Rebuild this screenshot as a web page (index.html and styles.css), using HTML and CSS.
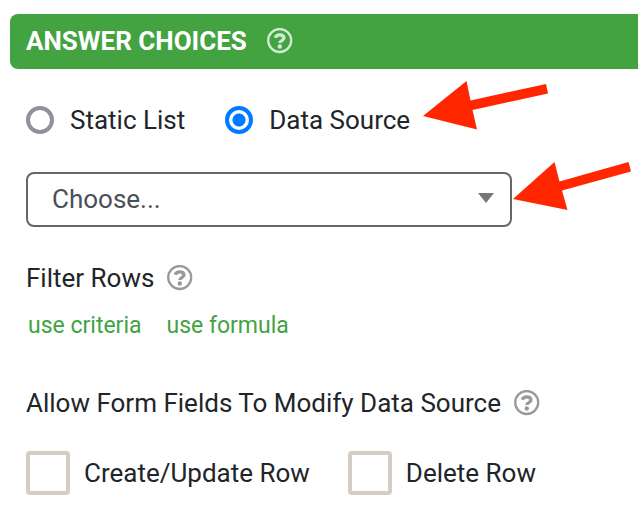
FILE: index.html
```html
<!DOCTYPE html>
<html lang="en">
<head>
<meta charset="utf-8">
<title>Answer Choices</title>
<link rel="stylesheet" href="styles.css">
</head>
<body>
<svg class="defs" aria-hidden="true">
  <symbol id="help" viewBox="0 0 26 26">
    <circle cx="12.700" cy="12.500" r="11.500" fill="none" stroke="currentColor" stroke-width="2.300"/>
    <path d="M8.300 9.800C9 7.800 10.600 6.900 12.700 6.900c2.400 0 4.200 1.200 4.200 3.200 0 2.600-4 2.400-4 4.900" fill="none" stroke="currentColor" stroke-width="3.400"/>
    <circle cx="12.800" cy="18.500" r="2.200" fill="currentColor"/>
  </symbol>
</svg>
<main class="panel">
  <header class="panel-header">
    <h1 class="panel-title">ANSWER CHOICES</h1>
    <button class="help help-light" type="button" aria-label="Help"><svg><use href="#help"/></svg></button>
  </header>
  <form class="panel-body">
    <div class="radios">
      <label class="option"><input class="radio" type="radio" name="source">Static List</label>
      <label class="option"><input class="radio" type="radio" name="source" checked>Data Source
        <svg class="arrow arrow-option" viewBox="0 0 126 50" aria-hidden="true"><path d="M0 36 43.500 1 47.500 20.500 123 4 125 13.500 49.500 30 54 49.500Z"/></svg>
      </label>
    </div>
    <div class="select-wrap">
      <select class="select" aria-label="Data source"><option>Choose...</option></select>
      <svg class="caret" viewBox="0 0 16 10" aria-hidden="true"><path d="M0 0h16L8 10Z"/></svg>
      <svg class="arrow arrow-select" viewBox="0 0 120 50" aria-hidden="true"><path d="M1 38 42.500 1 47.500 20.500 116.500 1 119 10.500 50 29.500 55.500 49Z"/></svg>
    </div>
    <div class="heading">
      <h2 class="label">Filter Rows</h2>
      <button class="help" type="button" aria-label="Help"><svg><use href="#help"/></svg></button>
    </div>
    <div class="links">
      <a href="#criteria">use criteria</a>
      <a href="#formula">use formula</a>
    </div>
    <div class="heading">
      <h2 class="label">Allow Form Fields To Modify Data Source</h2>
      <button class="help" type="button" aria-label="Help"><svg><use href="#help"/></svg></button>
    </div>
    <div class="checks">
      <label class="check"><input class="checkbox" type="checkbox">Create/Update Row</label>
      <label class="check"><input class="checkbox" type="checkbox">Delete Row</label>
    </div>
  </form>
</main>
</body>
</html>
```
FILE: styles.css
```css
* { box-sizing: border-box; }
body {
  margin: 0;
  background: #fff;
  color: #212529;
  font: 26px/36px Roboto, sans-serif;
}
.defs { position: absolute; width: 0; height: 0; }
.panel { padding: 14px 0 0 10px; }
.panel-header {
  display: flex;
  align-items: center;
  gap: 20px;
  height: 55px;
  padding: 0 16px 2px;
  border-radius: 8px 0 0 8px;
  background: #43a341;
  color: #fff;
}
.panel-title, .label { margin: 0; font-size: 26px; }
.panel-title { font-weight: 700; }
.label { font-weight: 400; }
.help {
  width: 26px;
  height: 26px;
  padding: 0;
  border: 0;
  background: none;
  color: #999;
}
.help svg { display: block; width: 26px; height: 26px; }
.help-light { color: #d3ead2; }
.panel-body { padding: 33px 16px 0; }
.radios { display: flex; gap: 40px; }
.option {
  position: relative;
  display: flex;
  align-items: center;
  gap: 16px;
}
.radio {
  appearance: none;
  width: 28px;
  height: 28px;
  margin: 0;
  border: 4px solid #9190a0;
  border-radius: 50%;
  background: #fff;
}
.radio:checked {
  border-color: #007bff;
  background: radial-gradient(circle, #007bff 6px, #fff 7px);
}
.arrow { position: absolute; fill: #ff2600; }
.arrow-option { left: 198px; top: -22px; width: 126px; height: 50px; }
.arrow-select { left: 100%; top: -11px; width: 120px; height: 50px; }
.select-wrap {
  position: relative;
  max-width: 486px;
  margin: 34px 0 33px;
}
.select {
  appearance: none;
  display: block;
  width: 100%;
  height: 55px;
  padding: 0 48px 2px 24px;
  border: 2px solid #666;
  border-radius: 8px;
  background: #fff;
  color: #495057;
  font: inherit;
}
.caret {
  position: absolute;
  right: 18px;
  top: 21px;
  width: 16px;
  height: 10px;
  fill: #777;
  pointer-events: none;
}
.heading { display: flex; align-items: center; gap: 13px; }
.links {
  display: flex;
  gap: 25px;
  margin: 14px 0 43px;
  padding-left: 2px;
  font-size: 23px;
  line-height: 32px;
}
.links a { color: #43a341; text-decoration: none; }
.checks { display: flex; gap: 38px; margin-top: 30px; }
.check { display: flex; align-items: center; gap: 14px; line-height: 38px; }
.checkbox {
  appearance: none;
  width: 44px;
  height: 44px;
  margin: 0;
  border: 4px solid #d3cdc6;
  border-radius: 4px;
  background: #fff;
}
```
